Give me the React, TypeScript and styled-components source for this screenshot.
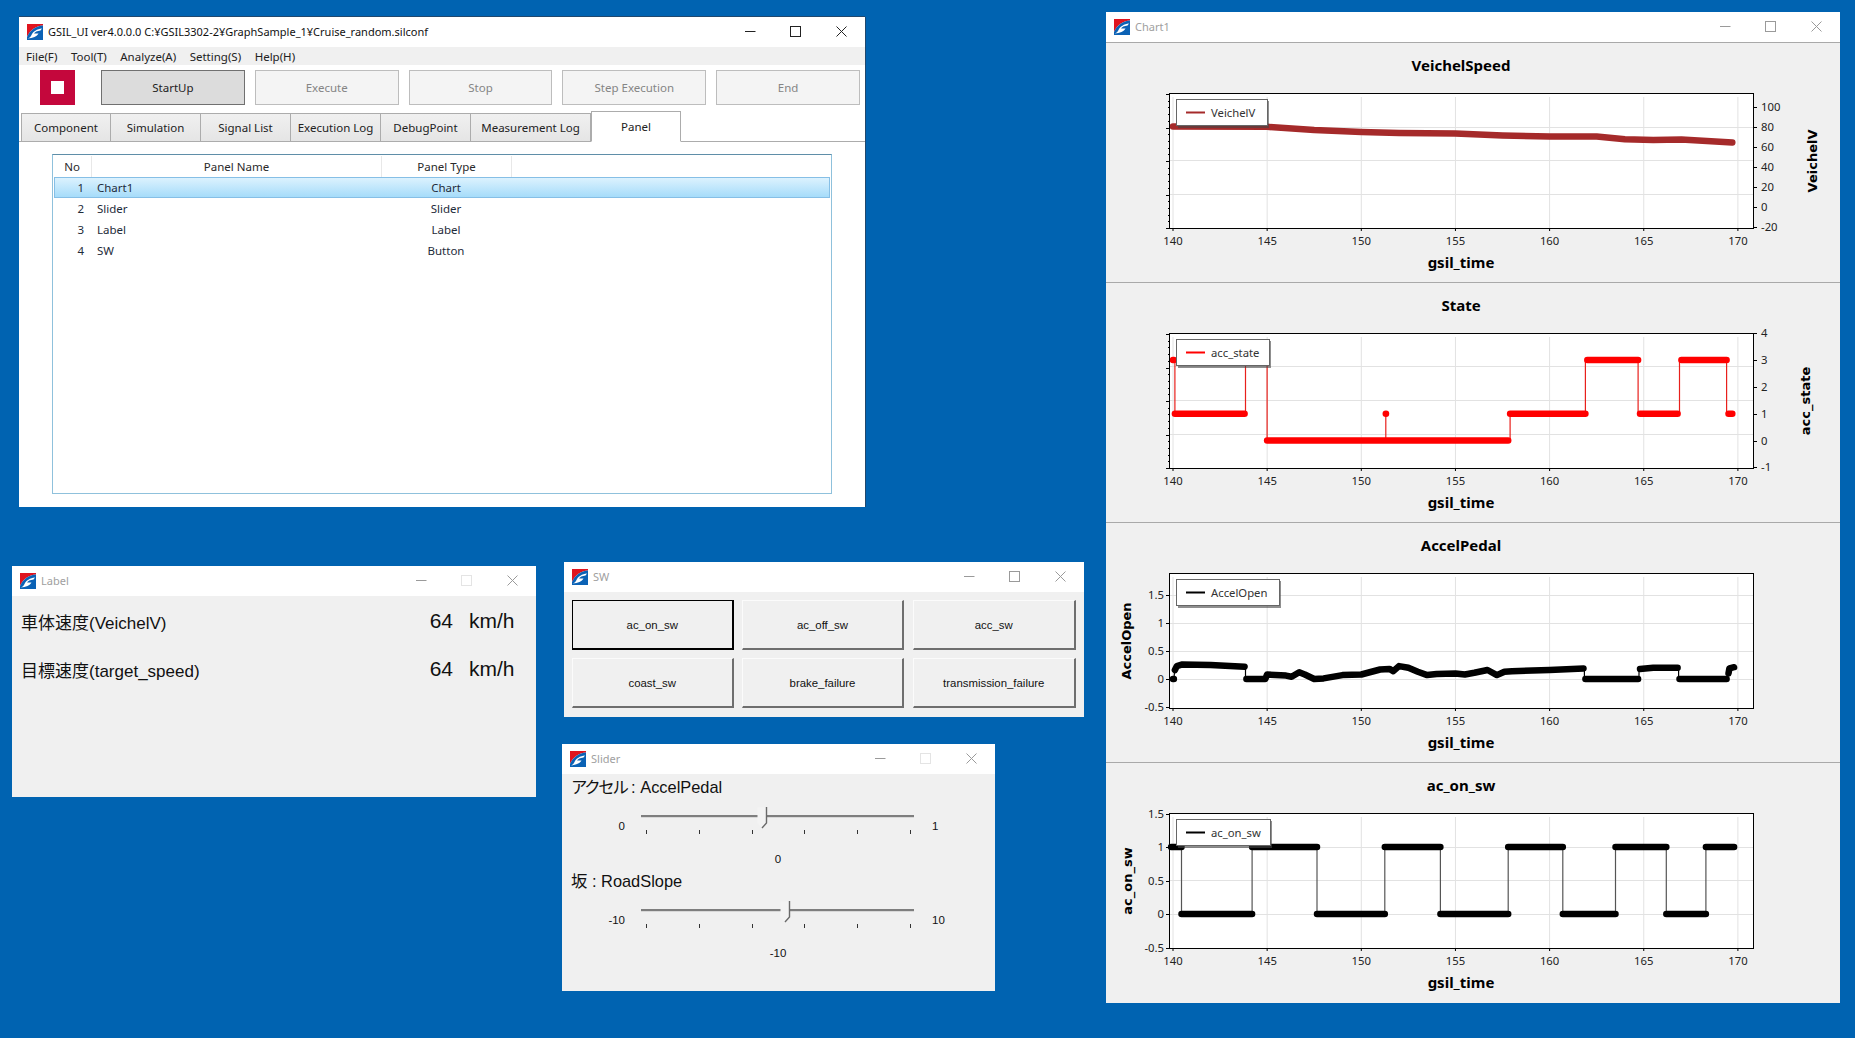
import * as React from "react";
import styled, { createGlobalStyle } from "styled-components";

const UI_FONT = `"Noto Sans", "Open Sans", sans-serif`;
const ARIAL_FONT = `"Liberation Sans", "Noto Sans CJK JP", sans-serif`;

const GlobalStyle = createGlobalStyle`
	html, body {
		margin: 0;
		padding: 0;
		background: #0063b1;
		overflow: hidden;
	}
`;

const Desktop = styled.div`
	position: relative;
	width: 1855px;
	height: 1038px;
	background: #0063b1;
	font-family: ${UI_FONT};
`;

const Window = styled.div<{ $x: number; $y: number; $w: number; $h: number; $active?: boolean }>`
	position: absolute;
	left: ${({ $x }) => $x}px;
	top: ${({ $y }) => $y}px;
	width: ${({ $w }) => $w}px;
	height: ${({ $h }) => $h}px;
	box-sizing: border-box;
	display: flex;
	flex-direction: column;
	background: ${({ $active }) => ($active ? "#fff" : "#f0f0f0")};
	box-shadow: ${({ $active }) => ($active ? "0 -1px 0 #20486e, 1px 0 0 #20486e" : "none")};
`;

const TitleBar = styled.div`
	flex: none;
	height: 30px;
	box-sizing: border-box;
	display: flex;
	align-items: center;
	background: #fff;
	padding: 0 0 1px 8px;
`;

const TitleText = styled.div<{ $active?: boolean }>`
	flex: 1;
	margin: -1px 0 0 5px;
	font-size: 11px;
	color: ${({ $active }) => ($active ? "#111" : "#a0a0a0")};
	white-space: nowrap;
`;

const Controls = styled.div`
	display: flex;
	padding: 0 1px 1px 0;
`;

const ControlButton = styled.div`
	width: 45.5px;
	display: flex;
	justify-content: center;
	align-items: center;
`;

const Logo = () => (
	<svg width="16" height="16" viewBox="0 0 16 16">
		<path d="M0 0H16V1.5C9 2 3 6 0 13Z" fill="#e0141e" />
		<path d="M16 1.5V16H0V13C3 6 9 2 16 1.5Z" fill="#0b62b5" />
		<path d="M4.5 11C6 7.5 10 5 15 4.5L13.5 6.5C10 6.8 8 8 7 9.5H11.5C10 12.5 6 14 0.5 14.5C2.5 14 4 12.5 4.5 11Z" fill="#fff" />
	</svg>
);

const WindowControls = ({ color, maxColor }: { color: string; maxColor?: string }) => (
	<Controls>
		<ControlButton>
			<svg width="11" height="11" viewBox="0 0 11 11">
				<path d="M0 5.5H10.5" stroke={color} strokeWidth="1" />
			</svg>
		</ControlButton>
		<ControlButton>
			<svg width="11" height="11" viewBox="0 0 11 11">
				<rect x="0.5" y="0.5" width="10" height="10" fill="none" stroke={maxColor || color} strokeWidth="1" />
			</svg>
		</ControlButton>
		<ControlButton>
			<svg width="11" height="11" viewBox="0 0 11 11">
				<path d="M0.5 0.5L10.5 10.5M10.5 0.5L0.5 10.5" stroke={color} strokeWidth="1" />
			</svg>
		</ControlButton>
	</Controls>
);

const WindowTitle = ({ title, active, maxColor }: { title: string; active?: boolean; maxColor?: string }) => (
	<TitleBar>
		<Logo />
		<TitleText $active={active}>{title}</TitleText>
		<WindowControls color={active ? "#222" : "#9a9a9a"} maxColor={maxColor} />
	</TitleBar>
);

/* main window */

const MenuBar = styled.div`
	flex: none;
	height: 18px;
	display: flex;
	align-items: center;
	gap: 13.5px;
	padding-left: 7px;
	background: #f0f0f0;
	font-size: 11.5px;
	color: #222;
`;

const Toolbar = styled.div`
	flex: none;
	display: flex;
	align-items: center;
	gap: 10px;
	padding: 5px 0 0 21px;
`;

const StopButton = styled.div`
	width: 35px;
	height: 35px;
	margin-right: 16px;
	background: #c4073c;
	display: flex;
	align-items: center;
	justify-content: center;

	&::after {
		content: "";
		width: 13px;
		height: 13px;
		background: #fff;
	}
`;

const ToolButton = styled.div<{ $pressed?: boolean }>`
	width: 143.8px;
	height: 35px;
	box-sizing: border-box;
	display: flex;
	align-items: center;
	justify-content: center;
	font-size: 11.5px;
	color: ${({ $pressed }) => ($pressed ? "#222" : "#858585")};
	background: ${({ $pressed }) => ($pressed ? "#dcdcdc" : "#f4f4f4")};
	border: 1px solid ${({ $pressed }) => ($pressed ? "#707070" : "#bdbdbd")};
`;

const TabRow = styled.div`
	flex: none;
	display: flex;
	align-items: flex-end;
	height: 31px;
	margin-top: 5px;
	padding-left: 2px;
	border-bottom: 1px solid #acacac;
`;

const Tab = styled.div<{ $active?: boolean; $wide?: boolean }>`
	width: ${({ $wide }) => ($wide ? 120 : 90)}px;
	height: ${({ $active }) => ($active ? 31 : 29)}px;
	box-sizing: border-box;
	display: flex;
	align-items: center;
	justify-content: center;
	margin-bottom: -1px;
	font-size: 11.5px;
	color: #222;
	background: ${({ $active }) => ($active ? "#fff" : "linear-gradient(#f0f0f0, #e5e5e5)")};
	border: 1px solid #acacac;
	border-bottom: ${({ $active }) => ($active ? "1px solid #fff" : "1px solid #acacac")};
	border-left-width: ${({ $active }) => ($active ? 1 : 0)}px;

	&:first-child {
		border-left-width: 1px;
	}
`;

const ListBox = styled.div`
	margin: 12px 33px 13px 33px;
	flex: 1;
	box-sizing: border-box;
	border: 1px solid #8fc1dc;
	border-top-color: #5f8ea8;
	font-size: 11.5px;
	color: #1e2b3a;
`;

const ListHeader = styled.div`
	display: grid;
	grid-template-columns: 39px 290px 130px;
	height: 21px;
	margin-top: 1px;
	color: #2a2a2a;
`;

const HeaderCell = styled.div`
	display: flex;
	align-items: center;
	justify-content: center;
	border-right: 1px solid #e8e8e8;
`;

const ListRow = styled.div<{ $selected?: boolean }>`
	display: grid;
	grid-template-columns: 37px 291px 126px;
	align-items: center;
	height: 21px;
	box-sizing: border-box;
	margin: 0 1px;
	border: 1px solid ${({ $selected }) => ($selected ? "#86bfe6" : "transparent")};
	background: ${({ $selected }) => ($selected ? "linear-gradient(#dcf2fe, #a6dcfa)" : "transparent")};
`;

const NumberCell = styled.div`
	text-align: right;
	padding-right: 8px;
`;

const NameCell = styled.div`
	padding-left: 5px;
`;

const TypeCell = styled.div`
	text-align: center;
`;

/* label window */

const LabelBody = styled.div`
	padding: 1px 22px 0 9px;
	font-family: ${ARIAL_FONT};
	color: #111;
`;

const LabelRow = styled.div`
	display: flex;
	align-items: center;
	height: 48px;
`;

const LabelName = styled.div`
	flex: 1;
	font-size: 17px;
`;

const LabelValue = styled.div`
	font-size: 21px;
`;

const LabelUnit = styled.div`
	width: 45px;
	margin-left: 16px;
	font-size: 21px;
	white-space: nowrap;
`;

/* switch window */

const SwitchGrid = styled.div`
	display: grid;
	grid-template-columns: 161.5px 162px 163.5px;
	grid-auto-rows: 50px;
	gap: 8px 8.5px;
	padding: 8px 8px 0;
`;

const SwitchButton = styled.div<{ $focused?: boolean }>`
	display: flex;
	align-items: center;
	justify-content: center;
	box-sizing: border-box;
	font-family: ${ARIAL_FONT};
	font-size: 11.4px;
	color: #111;
	background: #f0f0f0;
	border-style: solid;
	border-width: 1px 2px 2px 1px;
	border-color: ${({ $focused }) => ($focused ? "#000" : "#fbfbfb #6e6e6e #6e6e6e #fbfbfb")};
`;

/* slider window */

const SliderBlock = styled.div`
	height: 94px;
	font-family: ${ARIAL_FONT};
	color: #111;
`;

const Caption = styled.div`
	height: 26px;
	line-height: 26px;
	padding-left: 9px;
	font-size: 16.4px;
	white-space: nowrap;
`;

const Kana = styled.span`
	letter-spacing: -2.3px;
`;

const SliderRow = styled.div`
	display: grid;
	grid-template-columns: 63px 273px 1fr;
	column-gap: 16px;
	height: 48px;
`;

const RangeLabel = styled.div<{ $right?: boolean }>`
	padding-top: 19px;
	line-height: 14px;
	font-size: 11.5px;
	text-align: ${({ $right }) => ($right ? "right" : "left")};
	margin-left: ${({ $right }) => ($right ? 0 : 2)}px;
`;

const Track = styled.div`
	position: relative;
	padding-top: 15px;
`;

const Rail = styled.div`
	height: 2px;
	background: #7e7e7e;
	border-bottom: 1px solid #d8d8d8;
`;

const TickRow = styled.div`
	display: flex;
	justify-content: space-between;
	margin-top: 12px;
	padding: 0 3px 0 5px;
`;

const Tick = styled.div`
	width: 1px;
	height: 4px;
	background: #333;
`;

const ThumbHolder = styled.div<{ $left: number }>`
	position: absolute;
	left: ${({ $left }) => $left}px;
	top: 7px;
	line-height: 0;
`;

const SliderValue = styled.div`
	width: 432px;
	height: 20px;
	line-height: 23px;
	text-align: center;
	font-size: 11.5px;
`;

const Slider = ({ min, max, value, left, children }: { min: string; max: string; value: string; left: number; children: React.ReactNode }) => (
	<SliderBlock>
		<Caption>{children}</Caption>
		<SliderRow>
			<RangeLabel $right>{min}</RangeLabel>
			<Track>
				<Rail />
				<TickRow>
					{[0, 1, 2, 3, 4, 5].map(i => (
						<Tick key={i} />
					))}
				</TickRow>
				<ThumbHolder $left={left}>
					<svg width="11" height="22" viewBox="0 0 11 22">
						<path d="M0.5 0.5H9.5V16L5 21L0.5 16Z" fill="#f3f3f3" />
						<path d="M9.5 0V16L5 21" fill="none" stroke="#6a6a6a" strokeWidth="1.4" />
					</svg>
				</ThumbHolder>
			</Track>
			<RangeLabel>{max}</RangeLabel>
		</SliderRow>
		<SliderValue>{value}</SliderValue>
	</SliderBlock>
);

/* chart window */

const ChartSection = styled.div`
	flex: none;
	height: 240px;
	box-sizing: border-box;
	line-height: 0;
	border-top: 1px solid #a9a9a9;
`;

const ChartTitle = styled.text`
	font-family: ${UI_FONT};
	font-size: 15px;
	font-weight: 700;
	text-anchor: middle;
	fill: #000;
`;

const AxisTitle = styled.text`
	font-family: "DejaVu Sans", sans-serif;
	font-size: 13px;
	font-weight: 700;
	text-anchor: middle;
	fill: #000;
`;

const TickLabel = styled.text`
	font-family: ${UI_FONT};
	font-size: 11.3px;
	fill: #222;
`;

const LegendLabel = styled.text`
	font-family: ${UI_FONT};
	font-size: 11.3px;
	fill: #333;
`;

type Point = [number, number];

type ChartDef = {
	title: string;
	axisTitle: string;
	axisX: number;
	color: string;
	thinColor: string;
	legendW: number;
	side: "left" | "right";
	labels: [string, number][];
	toY: (v: number) => number;
	lines: Point[][];
	thin: Point[][];
	leftMinor: boolean;
	grid: number[];
};

const PLOT = { left: 64, right: 647, top: 51, bottom: 185 };
const toX = (t: number) => 67 + (t - 140) * 18.83;
const TIME_TICKS = [140, 145, 150, 155, 160, 165, 170];

const pathOf = (points: Point[], toY: (v: number) => number) =>
	points.map(([t, v], i) => `${i ? "L" : "M"}${toX(t).toFixed(1)} ${toY(v).toFixed(1)}`).join("");

const range = (n: number) => Array.from({ length: n }, (_, i) => i);

const Chart = ({ def }: { def: ChartDef }) => {
	const { toY } = def;
	return (
		<ChartSection>
			<svg width="734" height="239" viewBox="0 0 734 239">
				<ChartTitle x="355" y="28">{def.title}</ChartTitle>
				<rect x={PLOT.left} y={PLOT.top} width={PLOT.right - PLOT.left} height={PLOT.bottom - PLOT.top} fill="#fff" />
				{TIME_TICKS.map(t => (
					<path key={t} d={`M${toX(t)} ${PLOT.top + 3}V${PLOT.bottom}`} stroke="#e2e2e2" />
				))}
				{def.grid.map(y => (
					<path key={y} d={`M${PLOT.left} ${y + 0.5}H${PLOT.right}`} stroke="#e2e2e2" />
				))}
				{def.leftMinor &&
					range(21).map(i => {
						const y = Math.round(PLOT.top + i * 6.7) + 0.5;
						return <path key={i} d={`M${PLOT.left - (i % 5 ? 2 : 4)} ${y}H${PLOT.left}`} stroke="#000" />;
					})}
				{def.labels.map(([text, v]) => {
					const y = Math.round(toY(v)) + 0.5;
					const isRight = def.side === "right";
					return (
						<g key={text}>
							<path d={isRight ? `M${PLOT.right} ${y}h4` : `M${PLOT.left - 4} ${y}h4`} stroke="#000" />
							<TickLabel x={isRight ? PLOT.right + 8 : PLOT.left - 6} y={y + 3.5} textAnchor={isRight ? "start" : "end"}>
								{text}
							</TickLabel>
						</g>
					);
				})}
				{def.thin.map((pts, i) => (
					<path key={i} d={pathOf(pts, toY)} fill="none" stroke={def.thinColor} strokeWidth="1.2" />
				))}
				{def.lines.map((pts, i) => (
					<path key={i} d={pathOf(pts, toY)} fill="none" stroke={def.color} strokeWidth="6.5" strokeLinecap="round" strokeLinejoin="round" />
				))}
				<rect x={PLOT.left - 0.5} y={PLOT.top - 0.5} width={PLOT.right - PLOT.left + 1} height={PLOT.bottom - PLOT.top + 1} fill="none" stroke="#000" />
				{TIME_TICKS.map(t => (
					<g key={t}>
						<path d={`M${toX(t)} ${PLOT.bottom}v3`} stroke="#000" />
						<TickLabel x={toX(t)} y={202} textAnchor="middle">{t}</TickLabel>
					</g>
				))}
				<ChartTitle x="355" y="225">gsil_time</ChartTitle>
				<AxisTitle transform={`translate(${def.axisX} 118) rotate(-90)`}>{def.axisTitle}</AxisTitle>
				<rect x="72" y="58" width={def.legendW} height="27" fill="#444" opacity="0.6" />
				<rect x="70.5" y="56.5" width={def.legendW} height="26" fill="#fff" stroke="#666" />
				<path d="M80 69.5H99" stroke={def.color} strokeWidth="2" />
				<LegendLabel x="105" y="73.5">{def.axisTitle}</LegendLabel>
			</svg>
		</ChartSection>
	);
};

const stepOf = (changes: number[], first: number): { thick: Point[][]; thin: Point[][] } => {
	const thick: Point[][] = [];
	const thin: Point[][] = [];
	let level = first;
	for (let i = 0; i < changes.length - 1; i++) {
		thick.push([
			[changes[i], level],
			[changes[i + 1], level],
		]);
		if (i < changes.length - 2) {
			thin.push([
				[changes[i + 1], level],
				[changes[i + 1], level ? 0 : 1],
			]);
		}
		level = level ? 0 : 1;
	}
	return { thick, thin };
};

const acSteps = stepOf([139.9, 140.45, 144.2, 147.65, 151.25, 154.2, 157.8, 160.7, 163.5, 166.2, 168.3, 169.8], 1);

const CHARTS: ChartDef[] = [
	{
		title: "VeichelSpeed",
		axisTitle: "VeichelV",
		axisX: 711,
		color: "#a52a2a",
		thinColor: "#a52a2a",
		legendW: 91,
		side: "right",
		labels: [["100", 100], ["80", 80], ["60", 60], ["40", 40], ["20", 20], ["0", 0], ["-20", -20]],
		toY: v => 163.5 - v,
		leftMinor: true,
		grid: [84, 117, 151],
		thin: [],
		lines: [
			[
				[140, 80], [145, 79.7], [147.5, 76.5], [150, 74.6], [152, 73.5], [155, 73], [157.5, 71], [160, 70],
				[162.5, 70], [164, 67.3], [165.5, 66.6], [167, 67], [169.7, 64],
			],
		],
	},
	{
		title: "State",
		axisTitle: "acc_state",
		axisX: 704,
		color: "#ff0000",
		thinColor: "#e8201c",
		legendW: 93,
		side: "right",
		labels: [["4", 4], ["3", 3], ["2", 2], ["1", 1], ["0", 0], ["-1", -1]],
		toY: v => 157.5 - v * 26.8,
		leftMinor: true,
		grid: [83, 117, 151],
		thin: [
			[[140.1, 3], [140.1, 1]],
			[[143.85, 1], [143.85, 3], [145, 3], [145, 0]],
			[[151.3, 0], [151.3, 1]],
			[[157.9, 0], [157.9, 1]],
			[[161.9, 1], [161.9, 3]],
			[[164.7, 3], [164.7, 1]],
			[[166.9, 1], [166.9, 3]],
			[[169.4, 3], [169.4, 1]],
		],
		lines: [
			[[140, 3], [140.05, 3]],
			[[140.1, 1], [143.8, 1]],
			[[145, 0], [157.8, 0]],
			[[151.3, 1], [151.31, 1]],
			[[157.9, 1], [161.9, 1]],
			[[162, 3], [164.7, 3]],
			[[164.8, 1], [166.8, 1]],
			[[167, 3], [169.4, 3]],
			[[169.5, 1], [169.7, 1]],
		],
	},
	{
		title: "AccelPedal",
		axisTitle: "AccelOpen",
		axisX: 25,
		color: "#000",
		thinColor: "#000",
		legendW: 103,
		side: "left",
		labels: [["1.5", 1.5], ["1", 1], ["0.5", 0.5], ["0", 0], ["-0.5", -0.5]],
		toY: v => 156 - v * 56,
		leftMinor: false,
		grid: [72, 100, 128, 156],
		thin: [
			[[140.05, 0], [140.1, 0.2]],
			[[143.85, 0.22], [143.85, 0]],
			[[161.85, 0.19], [161.85, 0]],
			[[164.75, 0], [164.75, 0.18]],
			[[166.85, 0.2], [166.85, 0]],
			[[169.45, 0], [169.45, 0.18]],
		],
		lines: [
			[[140, 0], [140.05, 0]],
			[
				[140.1, 0.16], [140.2, 0.23], [140.5, 0.26], [142, 0.25], [143.8, 0.22],
			],
			[
				[143.9, 0], [144.9, 0], [145, 0.08], [146, 0.06], [146.3, 0.04], [146.7, 0.12], [147, 0.08], [147.5, 0], [148, 0.01],
				[149, 0.07], [150, 0.08], [151, 0.17], [151.5, 0.18], [151.7, 0.14], [152, 0.23], [152.5, 0.2], [153, 0.13], [153.5, 0.07],
				[154, 0.09], [155, 0.1], [155.5, 0.08], [156, 0.11], [156.7, 0.16], [157.2, 0.07], [157.6, 0.13], [158, 0.14], [160, 0.16],
				[161.8, 0.19],
			],
			[[161.9, 0], [164.7, 0]],
			[[164.8, 0.18], [165.5, 0.2], [166.8, 0.2]],
			[[166.9, 0], [169.4, 0]],
			[[169.5, 0.1], [169.55, 0.19], [169.8, 0.21]],
		],
	},
	{
		title: "ac_on_sw",
		axisTitle: "ac_on_sw",
		axisX: 26,
		color: "#000",
		thinColor: "#555",
		legendW: 94,
		side: "left",
		labels: [["1.5", 1.5], ["1", 1], ["0.5", 0.5], ["0", 0], ["-0.5", -0.5]],
		toY: v => 151 - v * 67,
		leftMinor: false,
		grid: [84, 117, 151],
		thin: acSteps.thin,
		lines: acSteps.thick,
	},
];

const TABS = ["Component", "Simulation", "Signal List", "Execution Log", "DebugPoint", "Measurement Log", "Panel"];
const TOOLS = ["Execute", "Stop", "Step Execution", "End"];
const MENUS = ["File(F)", "Tool(T)", "Analyze(A)", "Setting(S)", "Help(H)"];
const PANELS = [
	["1", "Chart1", "Chart"],
	["2", "Slider", "Slider"],
	["3", "Label", "Label"],
	["4", "SW", "Button"],
];
const SWITCHES = ["ac_on_sw", "ac_off_sw", "acc_sw", "coast_sw", "brake_failure", "transmission_failure"];

export default function App() {
	return (
		<Desktop>
			<GlobalStyle />
			<Window $x={19} $y={17} $w={846} $h={490} $active>
				<WindowTitle title="GSIL_UI ver4.0.0.0 C:¥GSIL3302-2¥GraphSample_1¥Cruise_random.silconf" active />
				<MenuBar>
					{MENUS.map(m => (
						<span key={m}>{m}</span>
					))}
				</MenuBar>
				<Toolbar>
					<StopButton />
					<ToolButton $pressed>StartUp</ToolButton>
					{TOOLS.map(t => (
						<ToolButton key={t}>{t}</ToolButton>
					))}
				</Toolbar>
				<TabRow>
					{TABS.map(t => (
						<Tab key={t} $active={t === "Panel"} $wide={t === "Measurement Log"}>
							{t}
						</Tab>
					))}
				</TabRow>
				<ListBox>
					<ListHeader>
						<HeaderCell>No</HeaderCell>
						<HeaderCell>Panel Name</HeaderCell>
						<HeaderCell>Panel Type</HeaderCell>
					</ListHeader>
					{PANELS.map(([no, name, type], i) => (
						<ListRow key={no} $selected={i === 0}>
							<NumberCell>{no}</NumberCell>
							<NameCell>{name}</NameCell>
							<TypeCell>{type}</TypeCell>
						</ListRow>
					))}
				</ListBox>
			</Window>

			<Window $x={12} $y={566} $w={524} $h={231}>
				<WindowTitle title="Label" maxColor="#e4e4e4" />
				<LabelBody>
					<LabelRow>
						<LabelName>車体速度(VeichelV)</LabelName>
						<LabelValue>64</LabelValue>
						<LabelUnit>km/h</LabelUnit>
					</LabelRow>
					<LabelRow>
						<LabelName>目標速度(target_speed)</LabelName>
						<LabelValue>64</LabelValue>
						<LabelUnit>km/h</LabelUnit>
					</LabelRow>
				</LabelBody>
			</Window>

			<Window $x={564} $y={562} $w={520} $h={155}>
				<WindowTitle title="SW" />
				<SwitchGrid>
					{SWITCHES.map((s, i) => (
						<SwitchButton key={s} $focused={i === 0}>
							{s}
						</SwitchButton>
					))}
				</SwitchGrid>
			</Window>

			<Window $x={562} $y={744} $w={433} $h={247}>
				<WindowTitle title="Slider" maxColor="#e4e4e4" />
				<Slider min="0" max="1" value="0" left={116}>
					<Kana>アクセル</Kana> : AccelPedal
				</Slider>
				<Slider min="-10" max="10" value="-10" left={139}>
					坂 : RoadSlope
				</Slider>
			</Window>

			<Window $x={1106} $y={12} $w={734} $h={991}>
				<WindowTitle title="Chart1" />
				{CHARTS.map(c => (
					<Chart key={c.title} def={c} />
				))}
			</Window>
		</Desktop>
	);
}
